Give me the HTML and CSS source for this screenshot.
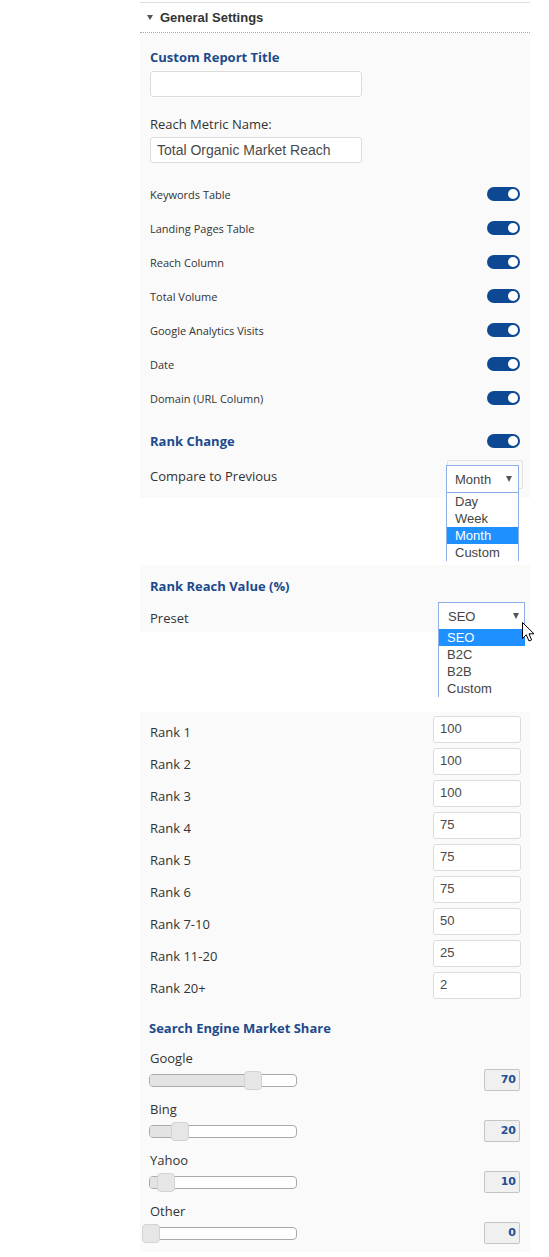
FILE: index.html
```html
<!DOCTYPE html>
<html>
<head>
<meta charset="utf-8">
<link rel="stylesheet" href="styles.css">
</head>
<body>
<div class="wrap">
  <div class="section-head"><span class="caret"></span>General Settings</div>

  <div class="panel panel-main">
    <div class="title">Custom Report Title</div>
    <input class="text-input" type="text" value="">
    <div class="field-label">Reach Metric Name:</div>
    <input class="text-input" type="text" value="Total Organic Market Reach">

    <div class="toggles">
      <div class="toggle-row"><span class="small-label">Keywords Table</span><span class="switch"></span></div>
      <div class="toggle-row"><span class="small-label">Landing Pages Table</span><span class="switch"></span></div>
      <div class="toggle-row"><span class="small-label">Reach Column</span><span class="switch"></span></div>
      <div class="toggle-row"><span class="small-label">Total Volume</span><span class="switch"></span></div>
      <div class="toggle-row"><span class="small-label">Google Analytics Visits</span><span class="switch"></span></div>
      <div class="toggle-row"><span class="small-label">Date</span><span class="switch"></span></div>
      <div class="toggle-row"><span class="small-label">Domain (URL Column)</span><span class="switch"></span></div>
    </div>

    <div class="toggle-row rank-change"><span class="title">Rank Change</span><span class="switch"></span></div>

    <div class="select-row compare-row">
      <span class="row-label">Compare to Previous</span>
      <div class="select select-month">
        <span class="select-value">Month</span><span class="arrow"></span>
        <ul class="listbox">
          <li>Day</li>
          <li>Week</li>
          <li class="selected">Month</li>
          <li>Custom</li>
        </ul>
      </div>
    </div>
  </div>

  <div class="panel panel-preset">
    <div class="title">Rank Reach Value (%)</div>
    <div class="select-row preset-row">
      <span class="row-label">Preset</span>
      <div class="select select-preset">
        <span class="select-value">SEO</span><span class="arrow"></span>
        <ul class="listbox listbox-preset">
          <li class="selected">SEO</li>
          <li>B2C</li>
          <li>B2B</li>
          <li>Custom</li>
        </ul>
        <svg class="cursor" width="13" height="20" viewBox="0 0 13 20"><path d="M0.5 0.5 L0.5 16.5 L4.3 12.8 L7 19 L9.6 17.9 L7 11.8 L12 11.8 Z" fill="#fff" stroke="#000" stroke-width="1" stroke-linejoin="miter"/></svg>
      </div>
    </div>
  </div>

  <div class="panel panel-ranks">
    <div class="rank-row"><span class="row-label">Rank 1</span><input class="num-input" type="text" value="100"></div>
    <div class="rank-row"><span class="row-label">Rank 2</span><input class="num-input" type="text" value="100"></div>
    <div class="rank-row"><span class="row-label">Rank 3</span><input class="num-input" type="text" value="100"></div>
    <div class="rank-row"><span class="row-label">Rank 4</span><input class="num-input" type="text" value="75"></div>
    <div class="rank-row"><span class="row-label">Rank 5</span><input class="num-input" type="text" value="75"></div>
    <div class="rank-row"><span class="row-label">Rank 6</span><input class="num-input" type="text" value="75"></div>
    <div class="rank-row"><span class="row-label">Rank 7-10</span><input class="num-input" type="text" value="50"></div>
    <div class="rank-row"><span class="row-label">Rank 11-20</span><input class="num-input" type="text" value="25"></div>
    <div class="rank-row"><span class="row-label">Rank 20+</span><input class="num-input" type="text" value="2"></div>

    <div class="title market-title">Search Engine Market Share</div>
    <div class="engines">
      <div class="engine">
        <div class="engine-label">Google</div>
        <div class="slider-row">
          <div class="track"><div class="range" style="width:70%"></div><div class="handle" style="left:calc(70% - 8px)"></div></div>
          <div class="value-box">70</div>
        </div>
      </div>
      <div class="engine">
        <div class="engine-label">Bing</div>
        <div class="slider-row">
          <div class="track"><div class="range" style="width:20%"></div><div class="handle" style="left:calc(20% - 8px)"></div></div>
          <div class="value-box">20</div>
        </div>
      </div>
      <div class="engine">
        <div class="engine-label">Yahoo</div>
        <div class="slider-row">
          <div class="track"><div class="range" style="width:10%"></div><div class="handle" style="left:calc(10% - 8px)"></div></div>
          <div class="value-box">10</div>
        </div>
      </div>
      <div class="engine">
        <div class="engine-label">Other</div>
        <div class="slider-row">
          <div class="track"><div class="range" style="width:0%"></div><div class="handle" style="left:calc(0% - 8px)"></div></div>
          <div class="value-box">0</div>
        </div>
      </div>
    </div>
  </div>
</div>
</body>
</html>
```

FILE: styles.css
```css
* { box-sizing: border-box; }

html, body {
  margin: 0;
  padding: 0;
  background: #ffffff;
}

body {
  font-family: "Open Sans", "Liberation Sans", sans-serif;
  color: #333;
}

.wrap {
  width: 390px;
  margin-left: 140px;
  padding-top: 2px;
}

.section-head {
  border-top: 1px solid #dddddd;
  border-bottom: 1px dotted #a9a9a9;
  height: 31px;
  line-height: 29px;
  font-family: "Liberation Sans", Arial, sans-serif;
  font-weight: bold;
  font-size: 13px;
  color: #333;
  display: flex;
  align-items: center;
}

.caret {
  display: inline-block;
  width: 0;
  height: 0;
  border-left: 3.5px solid transparent;
  border-right: 3.5px solid transparent;
  border-top: 5px solid #555;
  margin-left: 7px;
  margin-right: 7px;
}

.panel {
  background: #fafafa;
  padding-left: 10px;
  padding-right: 10px;
}

.title {
  font-family: "Open Sans", sans-serif;
  font-weight: 700;
  font-size: 13px;
  line-height: 18px;
  color: #1c4a8c;
}

.field-label {
  font-size: 13px;
  line-height: 18px;
  color: #333;
  margin-top: 18px;
}

.panel-main {
  padding-top: 15px;
  padding-bottom: 5px;
}

.text-input {
  display: block;
  width: 212px;
  height: 26px;
  margin-top: 5px;
  border: 1px solid #dcdcdc;
  border-radius: 3px;
  background: #fff;
  padding: 0 6px;
  font-family: "Liberation Sans", Arial, sans-serif;
  font-size: 14px;
  color: #4a4a4a;
  outline: none;
}

.field-label + .text-input {
  margin-top: 4px;
}

.toggles {
  margin-top: 14px;
}

.toggle-row {
  height: 34px;
  display: flex;
  align-items: center;
  justify-content: space-between;
}

.small-label {
  font-size: 11px;
  color: #333;
}

.switch {
  position: relative;
  width: 33px;
  height: 14px;
  border-radius: 7px;
  background: #0d4893;
}

.switch::after {
  content: "";
  position: absolute;
  right: 2px;
  top: 2px;
  width: 10px;
  height: 10px;
  border-radius: 50%;
  background: #fff;
}

.rank-change {
  margin-top: 9px;
}

.select-row {
  display: flex;
  justify-content: space-between;
  align-items: flex-start;
  margin-top: 5px;
}

.compare-row {
  position: relative;
}

.compare-row::before {
  content: "";
  position: absolute;
  right: -3px;
  top: -3px;
  width: 74px;
  height: 27px;
  border: 1px solid #e2e2e2;
  border-radius: 2px;
}

.row-label {
  font-size: 13px;
  line-height: 18px;
  padding-top: 4px;
  color: #333;
}

.select {
  position: relative;
  height: 28px;
  border: 1px solid #8eb0e6;
  background: #fff;
  display: flex;
  align-items: center;
  justify-content: space-between;
  padding: 0 6px 0 8px;
  font-family: "Liberation Sans", Arial, sans-serif;
  font-size: 13px;
  color: #444;
}

.select-month {
  width: 73px;
  margin-top: 2px;
  margin-right: 1px;
}

.arrow {
  width: 0;
  height: 0;
  border-left: 3.5px solid transparent;
  border-right: 3.5px solid transparent;
  border-top: 6px solid #555;
}

.listbox {
  position: absolute;
  left: -1px;
  top: calc(100% + 1px);
  width: calc(100% + 2px);
  margin: 0;
  padding: 0;
  list-style: none;
  background: #fff;
  border-left: 1px solid #8eb0e6;
  border-right: 1px solid #8eb0e6;
  z-index: 5;
}

.listbox li {
  height: 17px;
  line-height: 17px;
  padding-left: 8px;
  font-family: "Liberation Sans", Arial, sans-serif;
  font-size: 13px;
  color: #444;
}

.listbox li.selected {
  background: #1e90ff;
  color: #fff;
}

.listbox-preset {
  border-right: none;
  top: calc(100% + 0px);
}

.panel-preset {
  margin-top: 67px;
  padding-top: 12px;
  padding-bottom: 2px;
}

.preset-row {
  margin-top: 7px;
}

.preset-row .row-label {
  padding-top: 7px;
}

.select-preset {
  width: 87px;
  margin-right: -5px;
  padding-left: 9px;
  padding-right: 5px;
}

.cursor {
  position: absolute;
  left: 83px;
  top: 19px;
  z-index: 10;
}

.panel-ranks {
  margin-top: 80px;
  padding-top: 2px;
  padding-bottom: 8px;
}

.rank-row {
  height: 32px;
  display: flex;
  justify-content: space-between;
  align-items: flex-start;
}

.rank-row .row-label {
  padding-top: 9px;
}

.num-input {
  width: 88px;
  height: 27px;
  margin-top: 2px;
  margin-right: -1px;
  border: 1px solid #dcdcdc;
  border-radius: 3px;
  background: #fff;
  padding: 0 6px 2px 6px;
  font-family: "Liberation Sans", Arial, sans-serif;
  font-size: 13px;
  color: #4a4a4a;
  outline: none;
}

.market-title {
  margin-top: 17px;
  margin-left: -1px;
}

.engines {
  margin-top: 12px;
  display: flex;
  flex-direction: column;
  gap: 9px;
}

.engine-label {
  font-size: 13px;
  line-height: 18px;
  color: #333;
}

.slider-row {
  margin-top: 2px;
  height: 22px;
  display: flex;
  align-items: center;
  justify-content: space-between;
}

.track {
  position: relative;
  width: 148px;
  height: 13px;
  margin-left: -1px;
  border: 1px solid #aaaaaa;
  border-radius: 4px;
  background: #fff;
}

.range {
  position: absolute;
  left: 0;
  top: 0;
  bottom: 0;
  background: #e3e3e3;
  border-radius: 3px 0 0 3px;
}

.handle {
  position: absolute;
  top: -4px;
  width: 18px;
  height: 19px;
  background: #e6e6e6;
  border: 1px solid #d3d3d3;
  border-radius: 4px;
}

.value-box {
  width: 36px;
  height: 22px;
  border: 1px solid #c5c5c5;
  border-radius: 2px;
  background: #f0f0f0;
  text-align: right;
  padding-right: 3px;
  font-family: "DejaVu Sans", Verdana, sans-serif;
  font-weight: bold;
  font-size: 11px;
  line-height: 20px;
  color: #1f4f94;
}
```
